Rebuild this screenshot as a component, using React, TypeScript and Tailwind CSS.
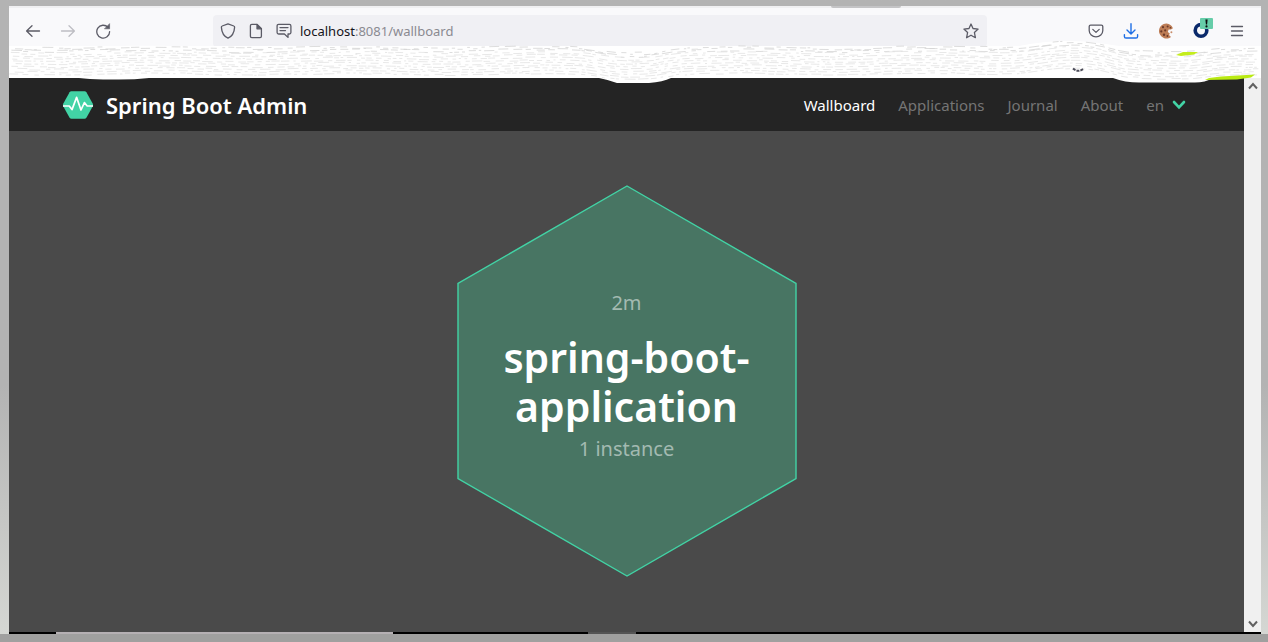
import React from "react";

type IconProps = { className?: string };

const stroke = {
  fill: "none",
  stroke: "currentColor",
  strokeWidth: 1.3,
  strokeLinecap: "round" as const,
  strokeLinejoin: "round" as const,
};

const BackIcon = ({ className }: IconProps) => (
  <svg viewBox="0 0 16 16" className={className} {...stroke} aria-hidden="true">
    <path d="M14.5 8H1.8M7 2.8L1.6 8L7 13.2" />
  </svg>
);

const ForwardIcon = ({ className }: IconProps) => (
  <svg viewBox="0 0 16 16" className={className} {...stroke} aria-hidden="true">
    <path d="M1.5 8H14.2M9 2.8L14.4 8L9 13.2" />
  </svg>
);

const ReloadIcon = ({ className }: IconProps) => (
  <svg viewBox="0 0 16 16" className={className} {...stroke} aria-hidden="true">
    <path d="M13 4.4A6.4 6.4 0 1 0 14.6 8.6" />
    <path d="M14.6 1V5.8H9.8Z" fill="currentColor" strokeWidth={0.6} />
  </svg>
);

const ShieldIcon = ({ className }: IconProps) => (
  <svg viewBox="0 0 16 16" className={className} {...stroke} aria-hidden="true">
    <path d="M8 .9L13.8 3C14.4 3.2 14.7 3.7 14.6 4.4C14.3 9.2 12 13.4 8 15.2C4 13.4 1.7 9.2 1.4 4.4C1.3 3.7 1.6 3.2 2.2 3Z" />
  </svg>
);

const PageIcon = ({ className }: IconProps) => (
  <svg viewBox="0 0 16 16" className={className} {...stroke} aria-hidden="true">
    <path d="M3.8 1.4H9L13.4 5.8V13.2Q13.4 14.6 12 14.6H3.8Q2.4 14.6 2.4 13.2V2.8Q2.4 1.4 3.8 1.4Z" />
    <path d="M9 1.4V5.8H13.4Z" fill="currentColor" />
  </svg>
);

const PermissionIcon = ({ className }: IconProps) => (
  <svg viewBox="0 0 16 16" className={className} {...stroke} aria-hidden="true">
    <path d="M2.6 1.4H13.4Q14.9 1.4 14.9 2.9V9.5Q14.9 11 13.4 11H12V14.4L8.4 11H2.6Q1.1 11 1.1 9.5V2.9Q1.1 1.4 2.6 1.4Z" />
    <path d="M4 4.6H12M4 7.6H9.5" />
  </svg>
);

const StarIcon = ({ className }: IconProps) => (
  <svg viewBox="0 0 16 16" className={className} {...stroke} aria-hidden="true">
    <path d="M8 1L10 5.500L15.1 6.1L11.4 9.500L12.4 14.7L8 12.2L3.6 14.7L4.6 9.500L.9 6.1L6 5.500Z" />
  </svg>
);

const PocketIcon = ({ className }: IconProps) => (
  <svg viewBox="0 0 16 16" className={className} {...stroke} aria-hidden="true">
    <path d="M2.6 2.2H13.4Q14.8 2.2 14.8 3.6V7.4A6.8 6.4 0 0 1 1.2 7.4V3.6Q1.2 2.2 2.6 2.2Z" />
    <path d="M4.8 6.4L8 9.4L11.2 6.4" />
  </svg>
);

const DownloadIcon = ({ className }: IconProps) => (
  <svg viewBox="0 0 16 16" className={className} {...stroke} strokeWidth={1.4} aria-hidden="true">
    <path d="M8 .8V10.6M4 7L8 10.9L12 7M1.4 11.6V13.4Q1.4 15 3 15H13Q14.6 15 14.6 13.4V11.6" />
  </svg>
);

const CookieIcon = ({ className }: IconProps) => (
  <svg viewBox="0 0 16 16" className={className} aria-hidden="true">
    <path
      d="M8.6.5A7.5 7.5 0 1 0 13 14L11 12L11.8 10.4L9.8 9L10.6 6.4L13 6.6L14.9 5.2A7.5 7.5 0 0 0 8.6.5Z"
      fill="#bd7d56"
    />
    <g fill="#6b3a2a">
      <circle cx="5" cy="4.2" r="1.1" />
      <circle cx="9.6" cy="3.4" r="1" />
      <circle cx="3.3" cy="8.4" r="1.1" />
      <circle cx="7.2" cy="7.4" r="1.1" />
      <circle cx="6" cy="11.8" r="1.2" />
      <circle cx="9.4" cy="13" r=".9" />
      <circle cx="12.4" cy="4.7" r=".8" />
    </g>
    <circle cx="13.4" cy="9.2" r="1" fill="#c98c68" />
  </svg>
);

const ExtensionIcon = ({ className }: IconProps) => (
  <svg viewBox="0 0 20 20" className={className} aria-hidden="true">
    <circle cx="8" cy="12.4" r="5.8" fill="none" stroke="#0b2a6b" strokeWidth="3.6" />
    <rect x="7" y="0" width="13" height="11" rx="1" fill="#66cda9" />
    <path d="M12.4 1.6H14.6L14.1 6.4H12.9Z" fill="#0c0c0d" />
    <circle cx="13.5" cy="8.4" r="1.1" fill="#0c0c0d" />
  </svg>
);

const MenuIcon = ({ className }: IconProps) => (
  <svg viewBox="0 0 16 16" className={className} {...stroke} aria-hidden="true">
    <path d="M2.5 3.500H13.5M2.500 8H13.5M2.500 12.500H13.5" />
  </svg>
);

const Logo = ({ className }: IconProps) => (
  <svg viewBox="0 0 32 28" className={className} aria-hidden="true">
    <path
      d="M9.4 .2H22.6Q23.8 .2 24.4 1.2L30.8 12.8Q31.4 14 30.8 15.2L24.4 26.8Q23.8 27.8 22.6 27.8H9.4Q8.2 27.8 7.6 26.8L1.2 15.2Q.6 14 1.2 12.8L7.6 1.2Q8.2 .2 9.4 .2Z"
      fill="#42d3a5"
    />
    <path
      d="M1 15H7.2L10 18.6L14.6 6.4L19 19L22.4 11.6L25.2 15H31"
      fill="none"
      stroke="#fff"
      strokeWidth="1.7"
      strokeLinejoin="round"
    />
  </svg>
);

const bump = (x: number, from: number, to: number, soft: number) =>
  1 / (1 + Math.exp(-(x - from) / soft)) - 1 / (1 + Math.exp(-(x - to) / soft));

const sweep = (x: number) =>
  5 * bump(x, 590, 655, 8) -
  7 * bump(x, 1030, 1092, 12) +
  5 * bump(x, 1105, 1195, 8) +
  Math.sin(x / 31) * 0.8;

const noise = (n: number) => {
  const v = Math.sin(n * 127.1 + 11.7) * 43758.5453;
  return v - Math.floor(v);
};

const grain = Array.from({ length: 11 }, (_, row) => {
  let d = "";
  let x = noise(row + 0.5) * 9;
  let n = row * 977;
  while (x < 1246) {
    n += 1;
    const length = 2 + noise(n) * 9;
    const end = Math.min(x + length, 1252);
    const y = 8 + row * 2.6 + (noise(n + 0.3) - 0.5) * (row < 3 ? 3 : 1.4);
    d += `M${x.toFixed(1)} ${(y + sweep(x)).toFixed(1)}L${end.toFixed(1)} ${(y + sweep(end)).toFixed(1)}`;
    x = end + 1 + noise(n + 0.7) * 5;
  }
  return d;
});

const TornStrip = () => (
  <div className="relative z-10 h-8 bg-white" aria-hidden="true">
    <svg
      viewBox="0 0 1252 46"
      preserveAspectRatio="none"
      className="absolute -top-1.5 left-0 h-[46px] w-full"
      fill="none"
    >
      <path
        d="M0 8Q60 5 200 6L560 6Q600 9 660 7L1010 6Q1050 -2 1090 3L1130 9L1252 7V38H1204Q1196 42.500 1186 42.500H1130Q1116 42.500 1104 38H662Q654 42 640 43H608Q600 40 590 38H140Q126 39.500 110 39.500H94Q80 39 70 38H0Z"
        fill="#fff"
      />
      {grain.map((d, i) => (
        <path key={i} d={d} stroke={i < 2 ? "#d4d4d4" : "#e2e2e2"} strokeWidth="0.8" />
      ))}
      <path d="M1064 28.500Q1069 33 1075 28.500" stroke="#4a4a57" strokeWidth="2" strokeDasharray="3 1" />
      <path d="M1167 15L1174 12H1189L1185 14.500L1172 16Z" fill="#c4ed1c" />
      <path d="M1200 38L1212 36.500L1246 34.500L1242 37.500L1228 39.500L1196 40Z" fill="#b9ea12" />
    </svg>
  </div>
);

const toolButton = "flex items-center justify-center";

const Toolbar = () => (
  <div className="flex h-10 items-center border-t-2 border-[#f0f0f2] bg-[#f9f9fb] px-4 pt-2 text-[#5b5b66]">
    <div className="flex items-center gap-[19px]">
      <button type="button" aria-label="Back" className={toolButton}>
        <BackIcon className="size-4" />
      </button>
      <button type="button" aria-label="Forward" className={`${toolButton} text-[#bdbdc3]`}>
        <ForwardIcon className="size-4" />
      </button>
      <button type="button" aria-label="Reload" className={toolButton}>
        <ReloadIcon className="size-4" />
      </button>
    </div>
    <div className="ml-[102px] flex h-8 flex-1 items-center gap-2 rounded bg-[#f0f0f4] pr-2 pl-[7px]">
      <div className="flex shrink-0 items-center gap-3">
        <ShieldIcon className="size-4" />
        <PageIcon className="size-4" />
        <PermissionIcon className="size-4" />
      </div>
      <a
        href="http://localhost:8081/wallboard"
        className="flex-1 text-[13px] leading-5 text-[#8a8a91]"
      >
        <span className="text-[#15141a]">localhost</span>:8081/wallboard
      </a>
      <button type="button" aria-label="Bookmark this page" className={toolButton}>
        <StarIcon className="size-4" />
      </button>
    </div>
    <div className="ml-[101px] flex items-center gap-[19px]">
      <button type="button" aria-label="Save to Pocket" className={toolButton}>
        <PocketIcon className="size-4" />
      </button>
      <button type="button" aria-label="Downloads" className={`${toolButton} text-[#1f6fe5]`}>
        <DownloadIcon className="size-4" />
      </button>
      <button type="button" aria-label="Cookie extension" className={toolButton}>
        <CookieIcon className="size-4" />
      </button>
      <button type="button" aria-label="Extension alert" className={`${toolButton} -mr-[3px]`}>
        <ExtensionIcon className="-mt-1.5 size-5" />
      </button>
      <button type="button" aria-label="Open menu" className={toolButton}>
        <MenuIcon className="size-4" />
      </button>
    </div>
  </div>
);

const links = ["Applications", "Journal", "About"];

const Navbar = () => (
  <header className="flex h-[53px] items-center justify-between bg-[#242424] pr-[58px] pl-[53px]">
    <a href="#home" className="flex items-center gap-3 text-[22px] leading-8 font-semibold text-white">
      <Logo className="h-7 w-8" />
      Spring Boot Admin
    </a>
    <nav className="flex items-center gap-[23px] text-[15px] leading-6 text-[#757575]">
      <a href="#wallboard" className="text-white">
        Wallboard
      </a>
      {links.map((label) => (
        <a key={label} href={`#${label.toLowerCase()}`}>
          {label}
        </a>
      ))}
      <button type="button" className="flex items-center gap-2">
        en
        <svg viewBox="0 0 14 10" className="h-2.5 w-3.5" fill="none" aria-hidden="true">
          <path d="M2 2L7 7.400L12 2" stroke="#42d3a5" strokeWidth="2.600" strokeLinecap="round" />
        </svg>
      </button>
    </nav>
  </header>
);

const Wallboard = () => (
  <main className="flex flex-1 items-center justify-center bg-[#4a4a4a] pb-0.5">
    <a href="#application" className="grid w-[340px] place-items-center">
      <svg viewBox="0 0 340 392" className="col-start-1 row-start-1 w-full" aria-hidden="true">
        <path
          d="M170 1L339 98.500V293.500L170 391L1 293.500V98.500Z"
          fill="#487563"
          stroke="#42d3a5"
          strokeWidth="1.400"
        />
      </svg>
      <div className="col-start-1 row-start-1 flex w-[270px] flex-col gap-0.5 pb-2.5 text-center text-[20px] leading-8 text-[#a3bab1]">
        <span>2m</span>
        <h1 className="mt-3 text-[41px] leading-[49px] font-semibold text-white">
          spring-boot-application
        </h1>
        <span>1 instance</span>
      </div>
    </a>
  </main>
);

const Scrollbar = () => (
  <div className="flex w-[17px] flex-col items-center justify-between bg-[#f0f0f0] py-1 text-[#606060]">
    <button type="button" aria-label="Scroll up">
      <svg viewBox="0 0 10 8" className="h-2 w-2.5" fill="none" stroke="currentColor" strokeWidth="2" aria-hidden="true">
        <path d="M1 6.500L5 2L9 6.500" />
      </svg>
    </button>
    <button type="button" aria-label="Scroll down">
      <svg viewBox="0 0 10 8" className="h-2 w-2.5" fill="none" stroke="currentColor" strokeWidth="2" aria-hidden="true">
        <path d="M1 1.500L5 6L9 1.500" />
      </svg>
    </button>
  </div>
);

export default function App() {
  return (
    <div className="flex min-h-screen flex-col bg-linear-to-b from-[#b3b3b3] from-60% to-[#d6d8d4] pt-1.5 pr-[7px] pl-[9px] font-['Noto_Sans','Segoe_UI',sans-serif]">
      <div className="relative flex flex-1 flex-col">
        <div
          className="absolute top-0 right-[360px] h-0.5 w-[70px] rounded-b bg-[#c4c4c6]"
          aria-hidden="true"
        />
        <Toolbar />
        <TornStrip />
        <div className="flex flex-1">
          <div className="flex flex-1 flex-col">
            <Navbar />
            <Wallboard />
          </div>
          <Scrollbar />
        </div>
        <div className="flex h-0.5 bg-black" aria-hidden="true">
          <div className="ml-[47px] w-[337px] bg-[#b5b0b3]" />
          <div className="ml-[195px] w-12 bg-[#555]" />
        </div>
      </div>
      <div className="-mr-[7px] -ml-[9px] h-2 bg-[#a0a09f]" />
    </div>
  );
}
